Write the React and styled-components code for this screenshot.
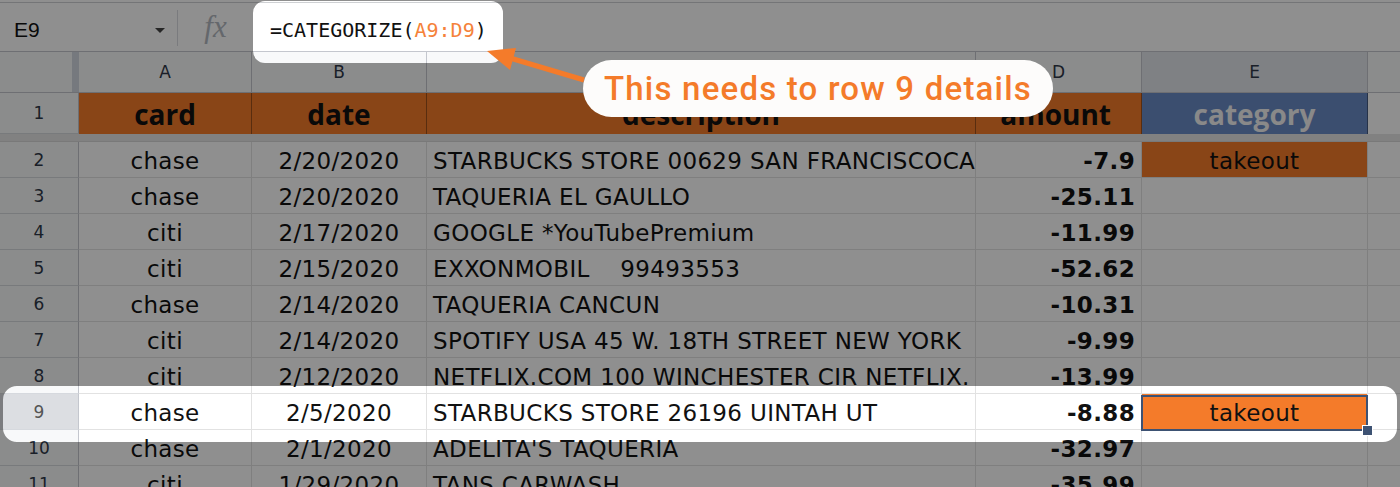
import React from 'react'
import styled, { createGlobalStyle } from 'styled-components'

const GlobalStyle = createGlobalStyle`
  html, body {
    margin: 0;
    padding: 0;
    background: #fff;
    overflow: hidden;
  }
`

const ORANGE = '#f47b2a'
const SELECT = '#3d5273'
const GRID = '#e2e2e2'

const columns = [
  { key: 'A', width: 173, align: 'center' },
  { key: 'B', width: 175, align: 'center' },
  { key: 'C', width: 549, align: 'flex-start' },
  { key: 'D', width: 166, align: 'flex-end' },
  { key: 'E', width: 226, align: 'center' },
  { key: 'F', width: 200, align: 'center' },
]

const rows = [
  ['chase', '2/20/2020', 'STARBUCKS STORE 00629 SAN FRANCISCOCA', '-7.9', 'takeout'],
  ['chase', '2/20/2020', 'TAQUERIA EL GAULLO', '-25.11', ''],
  ['citi', '2/17/2020', 'GOOGLE *YouTubePremium', '-11.99', ''],
  ['citi', '2/15/2020', 'EXXONMOBIL    99493553', '-52.62', ''],
  ['chase', '2/14/2020', 'TAQUERIA CANCUN', '-10.31', ''],
  ['citi', '2/14/2020', 'SPOTIFY USA 45 W. 18TH STREET NEW YORK', '-9.99', ''],
  ['citi', '2/12/2020', 'NETFLIX.COM 100 WINCHESTER CIR NETFLIX.', '-13.99', ''],
  ['chase', '2/5/2020', 'STARBUCKS STORE 26196 UINTAH UT', '-8.88', 'takeout'],
  ['chase', '2/1/2020', "ADELITA'S TAQUERIA", '-32.97', ''],
  ['citi', '1/29/2020', 'TANS CARWASH', '-35.99', ''],
]

const headers = ['card', 'date', 'description', 'amount', 'category']

const Page = styled.div`
  position: relative;
  width: 1400px;
  height: 487px;
  overflow: hidden;
  background: #fff;
  font-family: 'DejaVu Sans', Verdana, sans-serif;
  color: #111;
`

const FormulaBar = styled.div`
  display: flex;
  align-items: center;
  height: 50px;
  box-sizing: border-box;
  margin-top: 2px;
  padding-top: 6px;
  border-top: 1px solid #cfd1d4;
  border-bottom: 1px solid #c4c7ce;
`

const NameBox = styled.div`
  display: flex;
  align-items: center;
  justify-content: space-between;
  width: 177px;
  box-sizing: border-box;
  padding: 0 12px 0 14px;
  font-family: 'Liberation Sans', Arial, sans-serif;
  font-size: 21px;
  color: #111;
`

const Caret = styled.span`
  width: 0;
  height: 0;
  border-left: 5px solid transparent;
  border-right: 5px solid transparent;
  border-top: 5px solid #444;
`

const Divider = styled.span`
  width: 1px;
  height: 36px;
  margin-top: -4px;
  background: #dadce0;
`

const FxLabel = styled.div`
  width: 75px;
  text-align: center;
  font-family: 'Liberation Serif', 'Times New Roman', serif;
  font-style: italic;
  font-size: 31px;
  color: #b3b8c0;
  margin-top: -6px;
`

const FormulaText = styled.div`
  padding-left: 17px;
  font-family: 'DejaVu Sans Mono', 'Liberation Mono', monospace;
  font-size: 20px;
  color: #111;
`

const Ref = styled.span`
  color: #f5823a;
`

const HeaderStrip = styled.div`
  display: flex;
  height: 41px;
  box-sizing: border-box;
  border-bottom: 1px solid #c4c7ce;
  background: #f8f9fa;
`

const Corner = styled.div`
  width: 72px;
  flex: none;
  background: #f8f9fa;
`

const FreezeHandle = styled.div`
  width: 7px;
  flex: none;
  background: #d3d8e0;
`

const ColHeader = styled.div`
  width: ${(p) => p.$w}px;
  flex: none;
  display: flex;
  align-items: center;
  justify-content: center;
  box-sizing: border-box;
  border-right: 1px solid #c4c7ce;
  background: ${(p) => (p.$active ? '#e3e6eb' : '#f8f9fa')};
  font-size: 17px;
  color: #2f3848;
`

const Row = styled.div`
  display: flex;
  height: ${(p) => p.$h}px;
`

const RowHeader = styled.div`
  width: 79px;
  flex: none;
  display: flex;
  align-items: center;
  justify-content: center;
  box-sizing: border-box;
  border-right: 1px solid #c4c7ce;
  border-bottom: 1px solid #d6d9de;
  background: ${(p) => (p.$active ? '#dcdee2' : '#f8f9fa')};
  font-size: 17px;
  color: ${(p) => (p.$active ? '#555' : '#2f3848')};
`

const TitleCell = styled.div`
  width: ${(p) => p.$w}px;
  flex: none;
  display: flex;
  align-items: center;
  justify-content: ${(p) => p.$align};
  box-sizing: border-box;
  padding: 0 ${(p) => p.$pad}px;
  border-right: 1px solid rgba(0, 0, 0, 0.35);
  background: ${(p) => p.$fill};
  font-family: 'Open Sans', 'Liberation Sans', sans-serif;
  font-weight: 700;
  font-size: 28px;
  color: ${(p) => p.$ink};
  overflow: hidden;
  white-space: nowrap;
`

const FreezeBand = styled.div`
  height: 8px;
  background: #e6e6e6;
  border-bottom: 1px solid #d8d8d8;
  box-sizing: border-box;
`

const Cell = styled.div`
  position: relative;
  width: ${(p) => p.$w}px;
  flex: none;
  display: flex;
  align-items: center;
  justify-content: ${(p) => p.$align};
  box-sizing: border-box;
  padding: 2px 6px 0;
  border-right: 1px solid ${GRID};
  border-bottom: 1px solid ${GRID};
  background: ${(p) => p.$fill || 'transparent'};
  font-size: 23px;
  letter-spacing: 0.35px;
  font-weight: ${(p) => (p.$bold ? 700 : 400)};
  white-space: pre;
  overflow: ${(p) => (p.$selected ? 'visible' : 'hidden')};

  ${(p) =>
    p.$selected &&
    `
    &::after {
      content: '';
      position: absolute;
      left: -1px;
      top: 1px;
      right: -1px;
      bottom: -2px;
      border: 2px solid ${SELECT};
      z-index: 2;
    }
  `}
`

const FillHandle = styled.span`
  position: absolute;
  right: -6px;
  bottom: -7px;
  width: 9px;
  height: 9px;
  background: ${SELECT};
  border: 1px solid #fff;
  z-index: 3;
`

const Overlay = styled.svg`
  position: absolute;
  left: 0;
  top: 0;
  pointer-events: none;
`

const Callout = styled.div`
  position: absolute;
  left: 583px;
  top: 60px;
  width: 470px;
  height: 57px;
  border-radius: 29px;
  background: #fdfcfb;
  display: flex;
  align-items: center;
  justify-content: center;
  font-family: Roboto, 'Liberation Sans', sans-serif;
  font-weight: 500;
  font-size: 33px;
  letter-spacing: 1.2px;
  color: ${ORANGE};
`

const rr = (x, y, w, h, r) =>
  `M${x + r} ${y}H${x + w - r}A${r} ${r} 0 0 1 ${x + w} ${y + r}V${y + h - r}A${r} ${r} 0 0 1 ${x + w - r} ${y + h}H${x + r}A${r} ${r} 0 0 1 ${x} ${y + h - r}V${y + r}A${r} ${r} 0 0 1 ${x + r} ${y}Z`

const Spotlight = () => (
  <Overlay width="1400" height="487" viewBox="0 0 1400 487">
    <path
      fillRule="evenodd"
      fill="rgba(0,0,0,0.44)"
      d={`M0 0H1400V487H0Z ${rr(253, 1, 250, 62, 12)} ${rr(3, 386, 1394, 56, 14)}`}
    />
  </Overlay>
)

const Arrow = () => (
  <Overlay width="1400" height="487" viewBox="0 0 1400 487">
    <line x1="584" y1="80" x2="510" y2="58" stroke={ORANGE} strokeWidth="5" />
    <polygon points="487,51 516,48 510,70" fill={ORANGE} />
  </Overlay>
)

const SELECTED_ROW = 9

export default function App() {
  return (
    <Page>
      <GlobalStyle />
      <FormulaBar>
        <NameBox>
          E9
          <Caret />
        </NameBox>
        <Divider />
        <FxLabel>fx</FxLabel>
        <FormulaText>
          =CATEGORIZE(<Ref>A9:D9</Ref>)
        </FormulaText>
      </FormulaBar>

      <HeaderStrip>
        <Corner />
        <FreezeHandle />
        {columns.map((c) => (
          <ColHeader key={c.key} $w={c.width} $active={c.key === 'E'}>
            {c.key}
          </ColHeader>
        ))}
      </HeaderStrip>

      <Row $h={41}>
        <RowHeader>1</RowHeader>
        {headers.map((h, i) => (
          <TitleCell
            key={h}
            $w={columns[i].width}
            $align={i === 3 ? 'flex-end' : 'center'}
            $pad={i === 2 ? 0 : 30}
            $fill={i === 4 ? '#6a8bc6' : ORANGE}
            $ink={i === 4 ? '#f4f4f4' : '#111'}
          >
            {h}
          </TitleCell>
        ))}
      </Row>
      <FreezeBand />

      {rows.map((r, idx) => {
        const num = idx + 2
        const active = num === SELECTED_ROW
        return (
          <Row key={num} $h={36}>
            <RowHeader $active={active}>{num}</RowHeader>
            {r.map((v, i) => (
              <Cell
                key={i}
                $w={columns[i].width}
                $align={columns[i].align}
                $bold={i === 3}
                $fill={i === 4 && v ? ORANGE : undefined}
                $selected={active && i === 4}
              >
                {v}
                {active && i === 4 && <FillHandle />}
              </Cell>
            ))}
            <Cell $w={columns[5].width} $align="center" />
          </Row>
        )
      })}

      <Spotlight />
      <Arrow />
      <Callout>This needs to row 9 details</Callout>
    </Page>
  )
}
